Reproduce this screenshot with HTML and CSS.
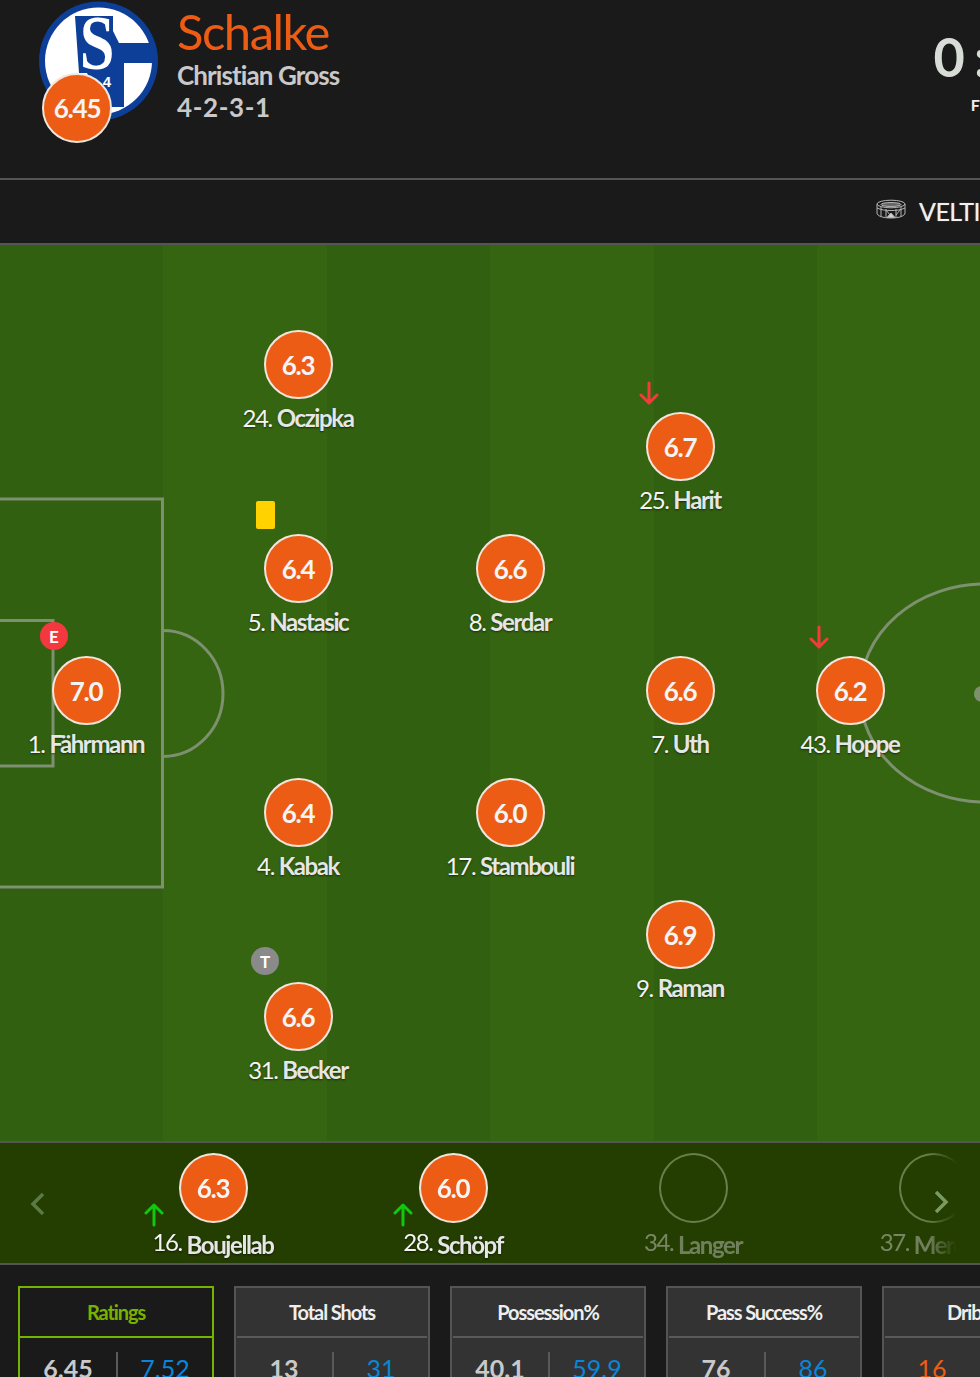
FILE: index.html
```html
<!DOCTYPE html>
<html lang="en">
<head>
<meta charset="utf-8">
<title>Schalke</title>
<link rel="stylesheet" href="styles.css">
</head>
<body>
<div class="page">
  <header class="match-head">
    <div class="crest">
      <svg class="crest-svg" viewBox="0 0 120 120" width="120" height="120">
        <circle cx="59.500" cy="60" r="59.500" fill="#0d3f98"/>
        <circle cx="59.500" cy="60" r="53.500" fill="#fff"/>
        <path d="M36 15 H74 V30 L80 42 H114 V62 H85 V106 H62 L48 72 H40 Z" fill="#0d3f98"/>
        <text class="crest-s" transform="translate(58 68) scale(0.8 1)">S</text>
        <text x="68" y="86" class="crest-n">4</text>
      </svg>
      <div class="team-rating">6.45</div>
    </div>
    <div class="team-info">
      <div class="team-name">Schalke</div>
      <div class="team-sub">Christian Gross</div>
      <div class="team-sub formation">4-2-3-1</div>
    </div>
    <div class="score">
      <div class="score-num">0 : 0</div>
      <div class="score-state">FT</div>
    </div>
  </header>

  <div class="venue-bar">
    <svg class="venue-icon" viewBox="0 0 30 20" width="30" height="20" fill="none" stroke="#b4b4b4" stroke-width="1">
      <ellipse cx="15" cy="5" rx="14" ry="3.800"/>
      <ellipse cx="15" cy="5.500" rx="10" ry="2" fill="#666"/>
      <path d="M1 5 V14 C1 17 7 19 15 19 C23 19 29 17 29 14 V5"/>
      <path d="M1 9 C5 11 10 11.500 15 11.500 C20 11.500 25 11 29 9"/>
      <path d="M5 8 V17 M10 10 V18.500 M20 10 V18.500 M25 8 V17 M10 11 L14 16 M20 16 L24 11"/>
      <path d="M11 18.500 L15 14 L19 18.500 Z" fill="#d0d0d0"/>
    </svg>
    <span class="venue-name">VELTINS-Arena</span>
  </div>

  <section class="pitch">
    <svg class="pitch-lines" viewBox="0 0 980 896" width="980" height="896" fill="none" stroke="#7d9070">
      <path d="M0 254 H162.500 V642 H0" stroke-width="3"/>
      <path d="M0 375.500 H53 V521 H0" stroke-width="3"/>
      <path d="M163 385.500 A60 63 0 0 1 163 511.500" stroke-width="3"/>
      <ellipse cx="985" cy="448" rx="125" ry="109" stroke-width="3"/>
      <circle cx="982" cy="449" r="8" fill="#7d9070" stroke="none"/>
    </svg>

    <div class="player p-oczipka"><div class="rating">6.3</div><div class="name"><span class="num">24.</span> <b>Oczipka</b></div></div>
    <div class="player p-harit">
      <svg class="arrow arrow-down" viewBox="0 0 20 24" width="20" height="24"><path d="M10 2 V22 M2 14 L10 22 L18 14"/></svg>
      <div class="rating">6.7</div><div class="name"><span class="num">25.</span> <b>Harit</b></div>
    </div>
    <div class="player p-nastasic">
      <div class="yellow-card"></div>
      <div class="rating">6.4</div><div class="name"><span class="num">5.</span> <b>Nastasic</b></div>
    </div>
    <div class="player p-serdar"><div class="rating">6.6</div><div class="name"><span class="num">8.</span> <b>Serdar</b></div></div>
    <div class="player p-fahrmann">
      <div class="marker marker-e">E</div>
      <div class="rating">7.0</div><div class="name"><span class="num">1.</span> <b>Fährmann</b></div>
    </div>
    <div class="player p-uth"><div class="rating">6.6</div><div class="name"><span class="num">7.</span> <b>Uth</b></div></div>
    <div class="player p-hoppe">
      <svg class="arrow arrow-down" viewBox="0 0 20 24" width="20" height="24"><path d="M10 2 V22 M2 14 L10 22 L18 14"/></svg>
      <div class="rating">6.2</div><div class="name"><span class="num">43.</span> <b>Hoppe</b></div>
    </div>
    <div class="player p-kabak"><div class="rating">6.4</div><div class="name"><span class="num">4.</span> <b>Kabak</b></div></div>
    <div class="player p-stambouli"><div class="rating">6.0</div><div class="name"><span class="num">17.</span> <b>Stambouli</b></div></div>
    <div class="player p-raman"><div class="rating">6.9</div><div class="name"><span class="num">9.</span> <b>Raman</b></div></div>
    <div class="player p-becker">
      <div class="marker marker-t">T</div>
      <div class="rating">6.6</div><div class="name"><span class="num">31.</span> <b>Becker</b></div>
    </div>
  </section>

  <section class="bench">
    <svg class="chevron chevron-left" viewBox="0 0 16 24" width="16" height="24"><path d="M13 2 L3 12 L13 22"/></svg>
    <div class="bench-track">
      <div class="sub">
        <svg class="arrow arrow-up" viewBox="0 0 20 24" width="20" height="24"><path d="M10 22 V2 M2 10 L10 2 L18 10"/></svg>
        <div class="rating">6.3</div><div class="name"><span class="num">16.</span> <b>Boujellab</b></div>
      </div>
      <div class="sub">
        <svg class="arrow arrow-up arrow-near" viewBox="0 0 20 24" width="20" height="24"><path d="M10 22 V2 M2 10 L10 2 L18 10"/></svg>
        <div class="rating">6.0</div><div class="name"><span class="num">28.</span> <b>Schöpf</b></div>
      </div>
      <div class="sub sub-unused"><div class="rating"></div><div class="name"><span class="num">34.</span> <b>Langer</b></div></div>
      <div class="sub sub-unused"><div class="rating"></div><div class="name"><span class="num">37.</span> <b>Mercan</b></div></div>
    </div>
    <svg class="chevron chevron-right" viewBox="0 0 16 24" width="16" height="24"><path d="M3 2 L13 12 L3 22"/></svg>
  </section>

  <section class="stats">
    <div class="stat stat-active">
      <div class="stat-title">Ratings</div>
      <div class="stat-values"><span>6.45</span><span class="away">7.52</span></div>
    </div>
    <div class="stat">
      <div class="stat-title">Total Shots</div>
      <div class="stat-values"><span>13</span><span class="away">31</span></div>
    </div>
    <div class="stat">
      <div class="stat-title">Possession%</div>
      <div class="stat-values"><span>40.1</span><span class="away">59.9</span></div>
    </div>
    <div class="stat">
      <div class="stat-title">Pass Success%</div>
      <div class="stat-values"><span>76</span><span class="away">86</span></div>
    </div>
    <div class="stat">
      <div class="stat-title">Dribbles</div>
      <div class="stat-values"><span class="home-hot">16</span><span class="away">12</span></div>
    </div>
  </section>
</div>
</body>
</html>
```

FILE: styles.css
```css
* { box-sizing: border-box; }
html, body { margin: 0; padding: 0; height: 100%; overflow: hidden; background: #1a1a1a; }
body { font-family: Lato, "Liberation Sans", sans-serif; color: #fff; }
.page { width: 980px; height: 1377px; overflow: hidden; }

/* Header */
.match-head { display: flex; height: 180px; padding: 1px 0 0 39px; border-bottom: 2px solid #555; background: #1a1a1a; }
.crest { position: relative; width: 120px; height: 120px; flex: none; }
.crest-svg { display: block; }
.crest-s { font-family: "Liberation Serif", serif; font-weight: 700; font-size: 78px; fill: #fff; text-anchor: middle; }
.crest-n { font-family: "Liberation Sans", sans-serif; font-weight: 700; font-size: 15px; fill: #fff; text-anchor: middle; }
.team-rating { position: absolute; left: 3px; top: 72px; width: 70px; height: 70px; border: 2px solid #f1e6dd; border-radius: 50%; background: #ec5c14; display: flex; align-items: center; justify-content: center; font-size: 26px; font-weight: 700; letter-spacing: -1.2px; color: #f4f4f4; }
.team-info { margin-left: 18px; display: flex; flex-direction: column; }
.team-name { font-size: 49px; line-height: 56px; margin-top: 2px; color: #ec5c14; letter-spacing: -1.5px; font-weight: 400; }
.team-sub { font-size: 26px; line-height: 32px; font-weight: 700; color: #c9c9c9; letter-spacing: -0.9px; }
.team-sub.formation { letter-spacing: 0.6px; }
.score { margin-left: auto; margin-right: -60px; width: 120px; text-align: center; padding-top: 27px; }
.score-num { font-size: 54px; line-height: 58px; font-weight: 700; color: #d8dcd6; white-space: nowrap; letter-spacing: -2px; }
.score-state { font-size: 16px; line-height: 20px; margin-top: 9px; font-weight: 700; color: #eee; }

/* Venue bar */
.venue-bar { display: flex; align-items: center; height: 65px; padding: 0 0 0 876px; border-bottom: 2px solid #555; background: #1a1a1a; white-space: nowrap; }
.venue-icon { flex: none; margin-top: -5px; }
.venue-name { margin: -2px 0 0 13px; font-size: 25px; line-height: 32px; color: #f0f0f0; letter-spacing: -0.5px; text-shadow: 0 0 1px rgba(255, 255, 255, 0.5); }

/* Pitch */
.pitch { position: relative; height: 896px; overflow: hidden; background: repeating-linear-gradient(90deg, #316010 0, #316010 163px, #366511 163px, #366511 327px); }
.pitch-lines { position: absolute; left: 0; top: 0; display: block; }
.player { position: absolute; width: 180px; margin-left: -90px; display: flex; flex-direction: column; align-items: center; }
.rating { width: 69px; height: 69px; border: 2px solid #f1e6dd; border-radius: 50%; background: #ec5c14; display: flex; align-items: center; justify-content: center; font-size: 26px; font-weight: 700; letter-spacing: -1.3px; color: #f4f4f4; flex: none; }
.name { margin-top: 4px; font-size: 24px; line-height: 30px; white-space: nowrap; color: #f4f4f4; letter-spacing: -1.4px; text-shadow: 0 1px 2px rgba(0, 0, 0, 0.55); }
.name b { font-weight: 700; color: #e6e6e6; }
.num { font-weight: 400; }

.p-oczipka { left: 298px; top: 85px; }
.p-harit { left: 680px; top: 167px; }
.p-nastasic { left: 298px; top: 289px; }
.p-serdar { left: 510px; top: 289px; }
.p-fahrmann { left: 86px; top: 411px; }
.p-uth { left: 680px; top: 411px; }
.p-hoppe { left: 850px; top: 411px; }
.p-kabak { left: 298px; top: 533px; }
.p-stambouli { left: 510px; top: 533px; }
.p-raman { left: 680px; top: 655px; }
.p-becker { left: 298px; top: 737px; }

.arrow { position: absolute; fill: none; stroke-width: 3; stroke-linecap: round; stroke-linejoin: round; }
.arrow-down { stroke: #f23b3b; left: 49px; top: -31px; }
.arrow-up { stroke: #10c810; }
.yellow-card { position: absolute; left: 48px; top: -33px; width: 19px; height: 28px; border-radius: 2px; background: #ffd200; }
.marker { position: absolute; left: 44px; top: -34px; width: 28px; height: 28px; border-radius: 50%; display: flex; align-items: center; justify-content: center; font-size: 17px; font-weight: 700; color: #fff; z-index: 1; }
.marker-e { background: #f4383f; }
.marker-t { background: #8a8a8a; left: 43px; top: -35px; }

/* Bench */
.bench { position: relative; height: 124px; padding-top: 10px; background: #243d00; border-top: 2px solid #555; border-bottom: 2px solid #555; }
.bench-track { display: flex; width: 957px; height: 110px; padding-left: 93px; overflow: hidden; -webkit-mask-image: linear-gradient(90deg, #000 97%, transparent); mask-image: linear-gradient(90deg, #000 97%, transparent); }
.sub { position: relative; flex: none; width: 240px; display: flex; flex-direction: column; align-items: center; }
.sub .rating { width: 69px; height: 70px; }
.sub .name { margin-top: 7px; }
.sub .num { position: relative; top: -3px; }
.sub .arrow-up { left: 51px; top: 50px; }
.sub .arrow-near { left: 60px; }
.sub-unused { opacity: 0.4; }
.sub-unused .rating { background: transparent; border-color: #cfe0bd; }
.sub-unused .name { text-shadow: none; }
.chevron { position: absolute; fill: none; stroke: #5c7a46; stroke-width: 3.5; }
.chevron-left { left: 30px; top: 49px; }
.chevron-right { left: 933px; top: 47px; stroke: #7a9a62; }

/* Stats */
.stats { display: flex; gap: 20px; padding: 21px 0 0 18px; background: #1a1a1a; }
.stat { flex: none; width: 196px; height: 140px; border: 2px solid #555; background: #333; }
.stat-title { height: 50px; margin: 0 1px; border-bottom: 2px solid #5a5a5a; display: flex; align-items: center; justify-content: center; font-size: 20px; font-weight: 700; letter-spacing: -1.1px; color: #eee; }
.stat-values { display: grid; grid-template-columns: 1fr 1fr; margin-top: 14px; font-size: 25px; line-height: 32px; font-weight: 700; text-align: center; color: #c9c9c9; }
.stat-values span + span { border-left: 2px solid #5a5a5a; }
.away { color: #0a85d9; font-weight: 400; }
.home-hot { color: #ec5c14; font-weight: 400; }
.stat-active { background: #1a1a1a; border-color: #76b300; }
.stat-active .stat-title { color: #76b300; margin: 0; border-bottom-color: #76b300; }
```
